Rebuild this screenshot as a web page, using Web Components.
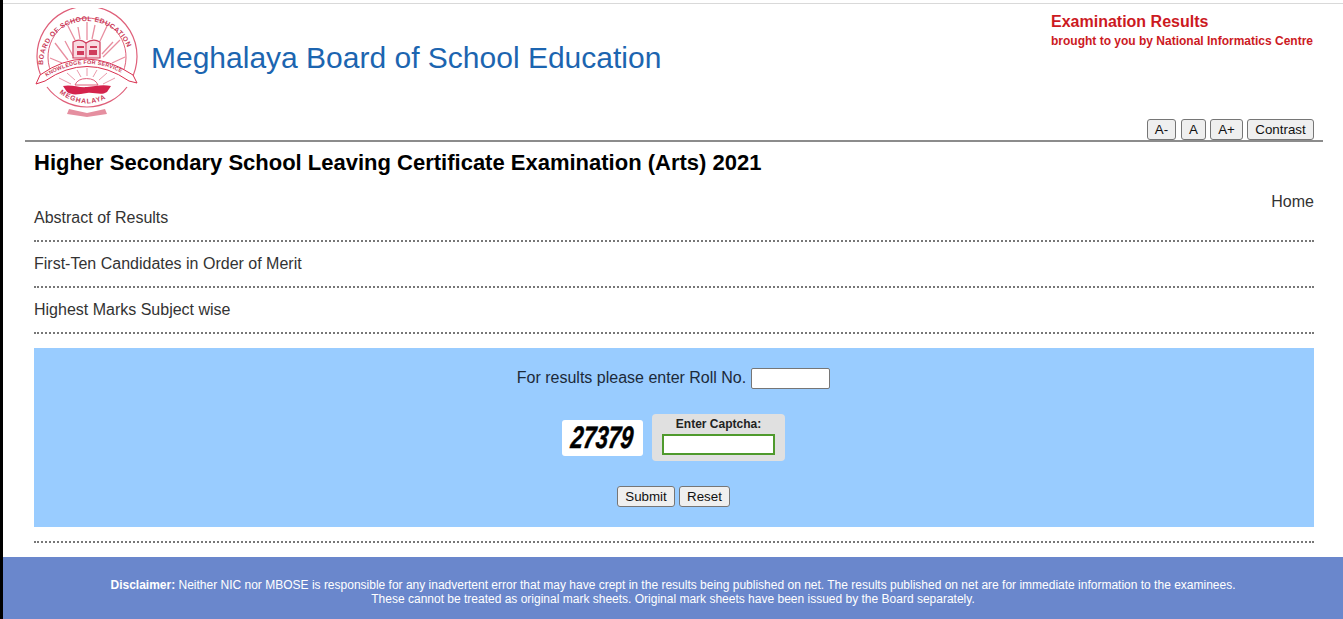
<!DOCTYPE html>
<html lang="en">
<head>
<meta charset="utf-8">
<title>Examination Results</title>
<style>
  html, body { margin: 0; padding: 0; background: #fff; }
  body { font-family: "Liberation Sans", Arial, sans-serif; }
</style>
</head>
<body>
<mb-page>
  <mb-header slot="header"></mb-header>
  <mb-links slot="content"></mb-links>
  <mb-form slot="content"></mb-form>
  <mb-footer slot="footer">
    <b>Disclaimer:</b> Neither NIC nor MBOSE is responsible for any inadvertent error that may have crept in the results being published on net. The results published on net are for immediate information to the examinees.<br>
    These cannot be treated as original mark sheets. Original mark sheets have been issued by the Board separately.
  </mb-footer>
</mb-page>

<script>
const pageTpl = document.createElement('template');
pageTpl.innerHTML = `
  <style>
    :host{
      display:flex;
      flex-direction:column;
      height:619px;
      box-sizing:border-box;
      border-left:3px solid #000;
      overflow:hidden;
    }
    .top{ height:3px; flex:none; }
    .line{ height:1px; flex:none; background:#d9d9d9; }
    .head{ flex:none; padding:0 20px 0 22px; }
    .content{ flex:1; padding:0 29px 0 31px; }
  </style>
  <div class="top"></div>
  <div class="line"></div>
  <div class="head"><slot name="header"></slot></div>
  <div class="content"><slot name="content"></slot></div>
  <slot name="footer"></slot>
`;
class MbPage extends HTMLElement {
  constructor() {
    super();
    this.attachShadow({ mode: 'open' });
    this.shadowRoot.appendChild(pageTpl.content.cloneNode(true));
  }
}

const logoTpl = document.createElement('template');
logoTpl.innerHTML = `
  <style>
    :host{ display:block; width:104px; height:110px; flex:none; }
    svg{ display:block; }
    text{ font-family:"Liberation Sans",Arial,sans-serif; font-weight:bold; fill:#c93a58; }
  </style>
  <svg width="104" height="110" viewBox="0 0 104 110">
    <defs>
      <path id="arc-top" d="M8 57 A44 44 0 1 1 96 57"/>
      <path id="arc-mid" d="M8 71 Q52 41 97 71"/>
      <path id="arc-low" d="M22 83 Q52 108 82 83"/>
    </defs>
    <g fill="none" stroke="#df5f79">
      <path d="M8 72 A50 50 0 1 1 96 72" stroke-width="1.2"/>
      <path d="M16 64 A39 39 0 1 1 88 64" stroke-width="1"/>
      <path d="M12 79 A50 50 0 0 0 92 79" stroke-width="1.2"/>
      <path d="M52 14V32M43 19L45 31M60 17L57 31M33 18L40 32M72 18L65 33M20 35L33 52M85 32L68 49M15 50L27 55M90 49L77 55M30 33L38 48M78 34L67 46" stroke-width="1.3" stroke="#e88ea0"/>
      <path d="M52 60V68M42 62L46 69M62 62L58 69M32 65L40 72M72 65L64 72M24 70L36 76M80 70L68 76" stroke-width=".9" stroke="#e88ea0"/>
    </g>
    <path d="M38 34Q45 30 51 35Q58 30 65 34V50H38Z" fill="#f8dbe1" stroke="#cf3d5c" stroke-width="1.2"/>
    <path d="M42 38h7v2h-7zM55 38h7v2h-7zM42 43h7v4h-7zM54 42h8v5h-8z" fill="#cf3d5c"/>
    <path d="M51 35V50" stroke="#cf3d5c"/>
    <path d="M5 67Q50 35 98 67L102 75 94 73Q52 44 10 73L1 76Z" fill="#fff" stroke="#d9304f" stroke-width="1"/>
    <path d="M40 77a12 9 0 0 1 23 0z" fill="#fff" stroke="#df5f79"/>
    <path d="M28 78C36 76 44 80 52 79C60 78 68 76 76 78L72 84C66 88 60 84 52 85C44 86 38 88 32 84Z" fill="#d4234c"/>
    <path d="M34 101l18 4 18-4 2 5-20 3-20-3z" fill="#e58fa0"/>
    <text font-size="6.8" letter-spacing=".45"><textPath href="#arc-top">BOARD OF SCHOOL EDUCATION</textPath></text>
    <text font-size="5.4" letter-spacing=".25"><textPath href="#arc-mid" startOffset="4">KNOWLEDGE FOR SERVICE</textPath></text>
    <text font-size="6.8" letter-spacing=".9"><textPath href="#arc-low" startOffset="3">MEGHALAYA</textPath></text>
  </svg>
`;
class MbLogo extends HTMLElement {
  constructor() {
    super();
    this.attachShadow({ mode: 'open' });
    this.shadowRoot.appendChild(logoTpl.content.cloneNode(true));
  }
}

const btnTpl = document.createElement('template');
btnTpl.innerHTML = `
  <style>
    :host{ display:inline-block; }
    button{
      display:block;
      box-sizing:border-box;
      height:21px;
      width:var(--w,auto);
      padding:0;
      font:13.33px "Liberation Sans",Arial,sans-serif;
      color:#111;
      background:#efefef;
      border:1px solid #767676;
      border-radius:3px;
    }
  </style>
  <button type="button"><slot></slot></button>
`;
class MbButton extends HTMLElement {
  constructor() {
    super();
    this.attachShadow({ mode: 'open' });
    this.shadowRoot.appendChild(btnTpl.content.cloneNode(true));
  }
}

const headerTpl = document.createElement('template');
headerTpl.innerHTML = `
  <style>
    :host{
      display:block;
      height:138px;
      box-sizing:border-box;
      border-bottom:2px solid #8c8c8c;
    }
    .row{ display:flex; height:136px; }
    .brand{ display:flex; flex:1; padding:4px 0 0 10px; gap:12px; }
    h1{
      margin:32px 0 0;
      font-size:30px;
      line-height:36px;
      font-weight:normal;
      color:#1c65b0;
    }
    .side{
      width:263px;
      padding-right:9px;
      display:flex;
      flex-direction:column;
      justify-content:space-between;
    }
    .cap{ padding-top:8px; color:#cc1a1f; font-weight:bold; font-size:12px; line-height:18px; white-space:nowrap; }
    .cap b{ display:block; font-size:16px; line-height:20px; }
    .tools{ display:flex; justify-content:flex-end; gap:4px; }
    mb-button:nth-child(1){ --w:29px; }
    mb-button:nth-child(2){ --w:25px; margin-left:1px; }
    mb-button:nth-child(3){ --w:33px; }
    mb-button:nth-child(4){ --w:67px; }
  </style>
  <div class="row">
    <div class="brand">
      <mb-logo></mb-logo>
      <h1>Meghalaya Board of School Education</h1>
    </div>
    <div class="side">
      <div class="cap"><b>Examination Results</b>brought to you by National Informatics Centre</div>
      <div class="tools">
        <mb-button>A-</mb-button>
        <mb-button>A</mb-button>
        <mb-button>A+</mb-button>
        <mb-button>Contrast</mb-button>
      </div>
    </div>
  </div>
`;
class MbHeader extends HTMLElement {
  constructor() {
    super();
    this.attachShadow({ mode: 'open' });
    this.shadowRoot.appendChild(headerTpl.content.cloneNode(true));
  }
}

const linksTpl = document.createElement('template');
linksTpl.innerHTML = `
  <style>
    :host{ display:block; color:#333; font-size:16px; }
    h2{
      margin:0;
      padding-top:8px;
      font-size:22px;
      line-height:25px;
      color:#000;
    }
    .home{ text-align:right; line-height:18px; margin-top:18px; }
    .item{
      height:46px;
      box-sizing:border-box;
      border-bottom:2px dotted #777;
      line-height:18px;
      padding-top:13px;
    }
    .item.first{ height:33px; margin-top:-2px; padding-top:0; }
  </style>
  <h2>Higher Secondary School Leaving Certificate Examination (Arts) 2021</h2>
  <div class="home">Home</div>
  <div class="item first">Abstract of Results</div>
  <div class="item">First-Ten Candidates in Order of Merit</div>
  <div class="item">Highest Marks Subject wise</div>
`;
class MbLinks extends HTMLElement {
  constructor() {
    super();
    this.attachShadow({ mode: 'open' });
    this.shadowRoot.appendChild(linksTpl.content.cloneNode(true));
  }
}

const formTpl = document.createElement('template');
formTpl.innerHTML = `
  <style>
    :host{ display:block; padding-top:14px; }
    .panel{
      height:179px;
      box-sizing:border-box;
      padding:20px 1px 0 0;
      background:#99ccff;
      color:#1c2a3a;
      display:flex;
      flex-direction:column;
      align-items:center;
    }
    .roll{ display:flex; align-items:center; gap:5px; font-size:16px; height:21px; }
    .roll span{ line-height:18px; margin-top:-2px; }
    input{
      display:block;
      box-sizing:border-box;
      background:#fff;
      border:1px solid #767676;
      border-radius:2px;
      padding:0;
      margin:0;
    }
    .roll input{ width:79px; height:21px; }
    .captcha{ display:flex; align-items:center; gap:9px; margin-top:25px; }
    .code{
      width:81px;
      height:36px;
      background:#fff;
      border-radius:3px;
      display:flex;
      align-items:center;
      justify-content:center;
      overflow:hidden;
    }
    .code span{
      display:block;
      font:italic bold 31px/36px "Liberation Sans",Arial,sans-serif;
      color:#000;
      -webkit-text-stroke:.5px #000;
      transform:scaleX(.72) skewX(-8deg);
    }
    .enter{
      width:133px;
      height:47px;
      box-sizing:border-box;
      padding-top:3px;
      background:#e0e0e0;
      border-radius:4px;
      text-align:center;
      font-size:12px;
      font-weight:bold;
      line-height:14px;
      color:#222;
    }
    .enter input{
      width:113px;
      height:21px;
      margin:3px auto 0;
      border:2px solid #4f9a2d;
      border-radius:0;
    }
    .actions{ display:flex; gap:4px; margin-top:25px; }
    .actions mb-button:nth-child(1){ --w:58px; }
    .actions mb-button:nth-child(2){ --w:51px; }
    .sep{ border-bottom:2px dotted #777; height:14px; }
  </style>
  <div class="panel">
    <div class="roll"><span>For results please enter Roll No.</span><input type="text" aria-label="Roll No."></div>
    <div class="captcha">
      <div class="code"><span>27379</span></div>
      <div class="enter">Enter Captcha:<input type="text" aria-label="Captcha"></div>
    </div>
    <div class="actions">
      <mb-button>Submit</mb-button>
      <mb-button>Reset</mb-button>
    </div>
  </div>
  <div class="sep"></div>
`;
class MbForm extends HTMLElement {
  constructor() {
    super();
    this.attachShadow({ mode: 'open' });
    this.shadowRoot.appendChild(formTpl.content.cloneNode(true));
  }
}

const footerTpl = document.createElement('template');
footerTpl.innerHTML = `
  <style>
    :host{
      display:block;
      flex:none;
      height:62px;
      box-sizing:border-box;
      padding-top:21px;
      background:#6a87cc;
      color:#fff;
      font-size:12px;
      line-height:14px;
      text-align:center;
    }
  </style>
  <slot></slot>
`;
class MbFooter extends HTMLElement {
  constructor() {
    super();
    this.attachShadow({ mode: 'open' });
    this.shadowRoot.appendChild(footerTpl.content.cloneNode(true));
  }
}

customElements.define('mb-page', MbPage);
customElements.define('mb-logo', MbLogo);
customElements.define('mb-button', MbButton);
customElements.define('mb-header', MbHeader);
customElements.define('mb-links', MbLinks);
customElements.define('mb-form', MbForm);
customElements.define('mb-footer', MbFooter);
</script>
</body>
</html>
